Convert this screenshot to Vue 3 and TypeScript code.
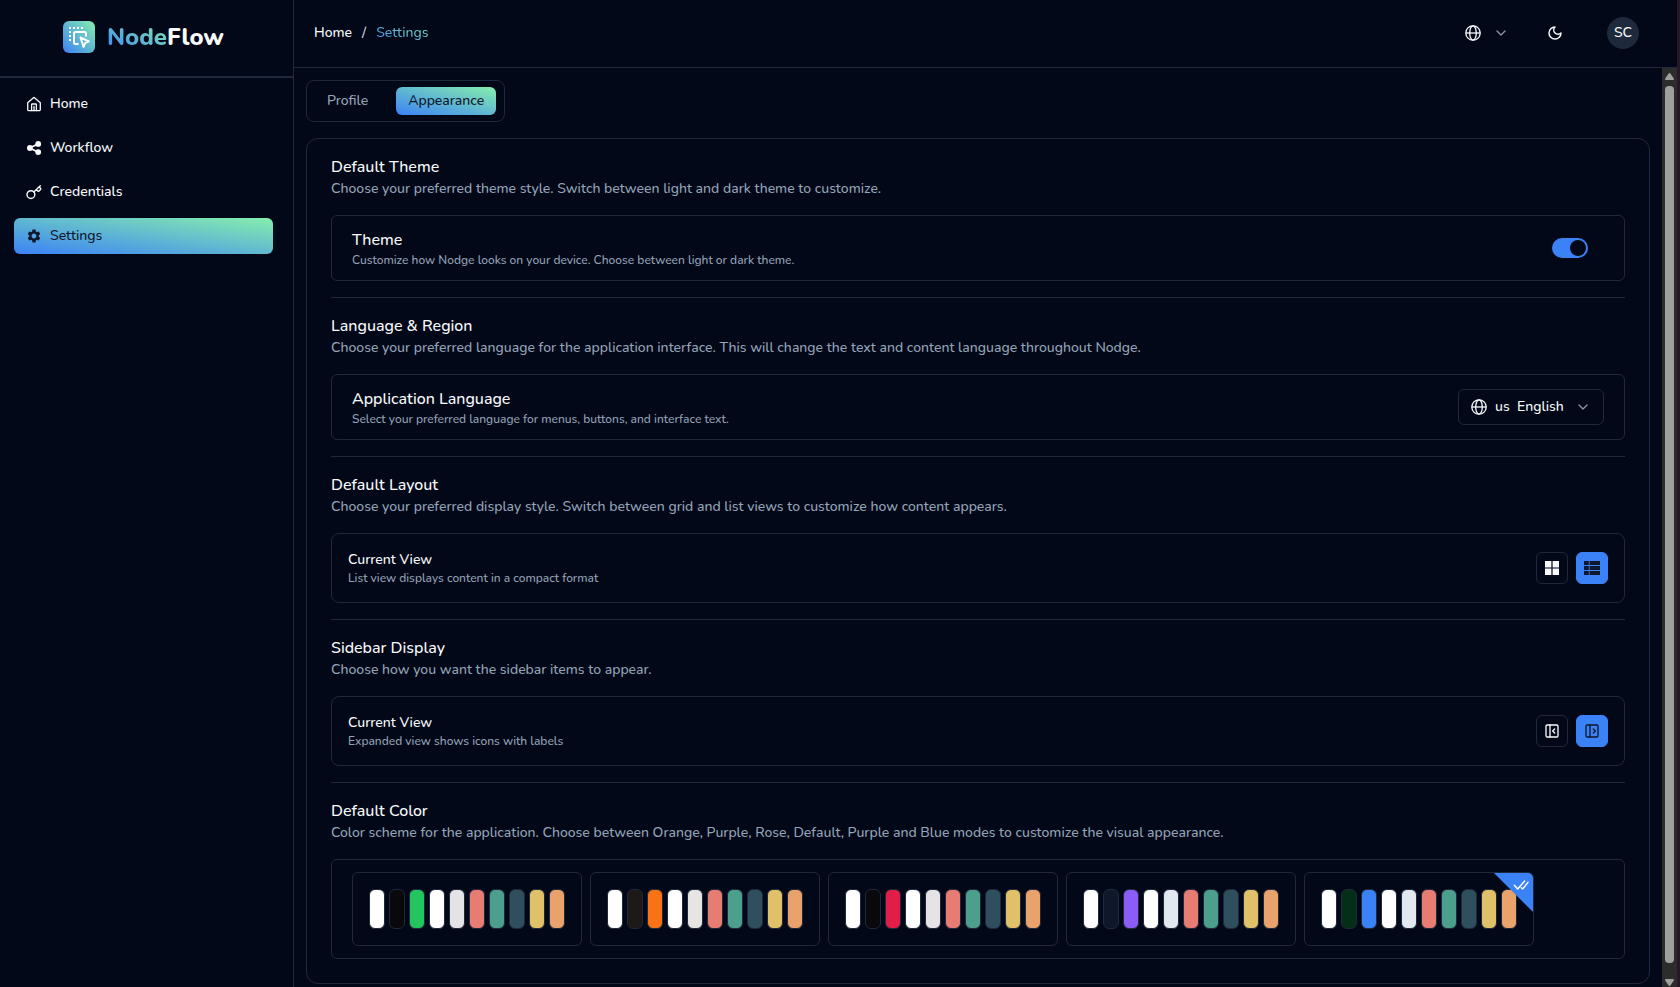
<script setup lang="ts">
import { ref } from 'vue'

interface NavItem {
  label: string
  icon: 'home' | 'share' | 'key' | 'gear'
  active?: boolean
}

interface Palette {
  name: string
  colors: string[]
}

const navItems: NavItem[] = [
  { label: 'Home', icon: 'home' },
  { label: 'Workflow', icon: 'share' },
  { label: 'Credentials', icon: 'key' },
  { label: 'Settings', icon: 'gear', active: true },
]

const charts = ['#e77c73', '#4b9f8c', '#2f4f5f', '#e0c068', '#e9a26b']

const palettes: Palette[] = [
  { name: 'Default', colors: ['#ffffff', '#09090b', '#22c55e', '#ffffff', '#e4e4e7', ...charts] },
  { name: 'Orange', colors: ['#ffffff', '#1c1917', '#f97316', '#ffffff', '#e7e5e4', ...charts] },
  { name: 'Rose', colors: ['#ffffff', '#09090b', '#e11d48', '#ffffff', '#e4e4e7', ...charts] },
  { name: 'Purple', colors: ['#ffffff', '#0f172a', '#8b5cf6', '#ffffff', '#e2e8f0', ...charts] },
  { name: 'Blue', colors: ['#ffffff', '#052e16', '#3b82f6', '#ffffff', '#e2e8f0', ...charts] },
]

const tab = ref('Appearance')
const dark = ref(true)
const language = ref('us')
const layout = ref<'grid' | 'list'>('list')
const sidebar = ref<'collapsed' | 'expanded'>('expanded')
const palette = ref('Blue')
</script>

<template>
  <div class="app">
    <aside class="sidebar">
      <div class="brand">
        <span class="brand-mark">
          <svg width="24" height="24" viewBox="0 0 24 24" fill="none" stroke="#fff" stroke-width="2">
            <path fill="#fff" stroke="none" d="M2 2h2v2H2zM6 2h2v2H6zM10 2h2v2h-2zM14 2h2v2h-2zM2 6h2v2H2zM2 10h2v2H2zM2 14h2v2H2z" />
            <path d="M11.500 19H8.500A1.500 1.500 0 0 1 7 17.500V8.500A1.500 1.500 0 0 1 8.500 7h9A1.500 1.500 0 0 1 19 8.500V11.500" />
            <path stroke-linejoin="round" d="M13.500 12.500l8.300 3.800-3.400 1.600-1.800 4z" />
          </svg>
        </span>
        <span class="brand-name"><span class="gradient-text">Node</span>Flow</span>
      </div>
      <nav class="nav">
        <a v-for="item in navItems" :key="item.label" href="#" class="nav-link" :class="{ active: item.active }">
          <svg v-if="item.icon === 'home'" width="16" height="16" viewBox="0 0 16 16" fill="none" stroke="currentColor" stroke-width="1.300" stroke-linejoin="round" stroke-linecap="round">
            <path d="M1.700 6.700 7.200 1.900a1.200 1.200 0 0 1 1.600 0l5.500 4.800v6.700a1.200 1.200 0 0 1-1.200 1.200H2.900a1.200 1.200 0 0 1-1.200-1.200z" />
            <path d="M5.600 14.500V8.800a.8.8 0 0 1 .8-.8h3.200a.8.8 0 0 1 .8.800v5.700M8 10.500v4" />
          </svg>
          <svg v-else-if="item.icon === 'share'" width="16" height="16" viewBox="0 0 16 16" fill="currentColor">
            <path d="M3.500 8 12 4M3.500 8l8.500 4" stroke="currentColor" stroke-width="1.800" />
            <circle cx="3.900" cy="8" r="2.900" />
            <circle cx="12.200" cy="3.900" r="2.900" />
            <circle cx="12.200" cy="12.100" r="2.900" />
          </svg>
          <svg v-else-if="item.icon === 'key'" width="16" height="16" viewBox="0 0 16 16" fill="none" stroke="currentColor" stroke-width="1.400" stroke-linejoin="round" stroke-linecap="round">
            <circle cx="4.900" cy="10.600" r="3.900" />
            <path d="M7.800 8 14.300 1.800M10.400 5.400l1.400 1.500a.9.900 0 0 0 1.300 0l1.400-1.400a.9.900 0 0 0 0-1.300L13 2.900" />
          </svg>
          <svg v-else width="16" height="16" viewBox="0 0 24 24" fill="currentColor">
            <path d="M19.140 12.940c.04-.3.06-.61.06-.94 0-.32-.02-.64-.07-.94l2.030-1.580c.18-.14.23-.41.12-.61l-1.920-3.320c-.12-.22-.37-.29-.59-.22l-2.390.96c-.5-.38-1.030-.7-1.620-.94l-.36-2.540c-.04-.24-.24-.41-.48-.41h-3.840c-.24 0-.43.17-.47.41l-.36 2.540c-.59.24-1.130.57-1.620.94l-2.390-.96c-.22-.08-.47 0-.59.22L2.740 8.870c-.12.21-.08.47.12.61l2.030 1.580c-.05.3-.09.63-.09.94s.02.64.07.94l-2.030 1.580c-.18.14-.23.41-.12.61l1.920 3.320c.12.22.37.29.59.22l2.390-.96c.5.38 1.030.7 1.620.94l.36 2.540c.05.24.24.41.48.41h3.840c.24 0 .44-.17.47-.41l.36-2.540c.59-.24 1.130-.56 1.620-.94l2.390.96c.22.08.47 0 .59-.22l1.920-3.320c.12-.22.07-.47-.12-.61l-2.010-1.580zM12 15.600c-1.980 0-3.600-1.620-3.600-3.600s1.620-3.600 3.600-3.600 3.600 1.620 3.600 3.600-1.620 3.600-3.600 3.600z" />
          </svg>
          <span>{{ item.label }}</span>
        </a>
      </nav>
    </aside>

    <div class="page">
      <header class="topbar">
        <nav class="crumbs" aria-label="Breadcrumb">
          <a href="#">Home</a>
          <span class="crumb-sep">/</span>
          <span class="gradient-text">Settings</span>
        </nav>
        <div class="actions">
          <button type="button" class="plain lang-menu" aria-label="Change language">
            <svg width="16" height="16" viewBox="0 0 16 16" fill="none" stroke="currentColor" stroke-width="1.300">
              <circle cx="8" cy="8" r="7.200" />
              <ellipse cx="8" cy="8" rx="3.300" ry="7.200" />
              <path d="M.8 8h14.400" />
            </svg>
            <svg class="chevron" width="16" height="16" viewBox="0 0 24 24" fill="none" stroke="currentColor" stroke-width="2" stroke-linecap="round" stroke-linejoin="round">
              <path d="m6 9 6 6 6-6" />
            </svg>
          </button>
          <button type="button" class="plain mode" aria-label="Toggle theme">
            <svg width="16" height="16" viewBox="0 0 24 24" fill="none" stroke="currentColor" stroke-width="2.200" stroke-linecap="round" stroke-linejoin="round">
              <path d="M12 3a6 6 0 0 0 9 9 9 9 0 1 1-9-9Z" />
            </svg>
          </button>
          <button type="button" class="avatar">SC</button>
        </div>
      </header>

      <div class="body">
        <main class="content">
          <div class="tabs">
            <button v-for="t in ['Profile', 'Appearance']" :key="t" type="button" class="tab" :class="{ active: tab === t }" @click="tab = t">{{ t }}</button>
          </div>

          <div class="panel">
            <section class="group">
              <h2>Default Theme</h2>
              <p class="desc">Choose your preferred theme style. Switch between light and dark theme to customize.</p>
              <div class="box roomy">
                <div class="label">
                  <label for="theme-switch" class="name">Theme</label>
                  <p class="hint">Customize how Nodge looks on your device. Choose between light or dark theme.</p>
                </div>
                <input id="theme-switch" v-model="dark" type="checkbox" role="switch" class="switch" />
              </div>
            </section>

            <section class="group">
              <h2>Language &amp; Region</h2>
              <p class="desc">Choose your preferred language for the application interface. This will change the text and content language throughout Nodge.</p>
              <div class="box roomy">
                <div class="label">
                  <label for="language" class="name">Application Language</label>
                  <p class="hint">Select your preferred language for menus, buttons, and interface text.</p>
                </div>
                <div class="select">
                  <svg width="16" height="16" viewBox="0 0 16 16" fill="none" stroke="currentColor" stroke-width="1.300">
                    <circle cx="8" cy="8" r="7.200" />
                    <ellipse cx="8" cy="8" rx="3.300" ry="7.200" />
                    <path d="M.8 8h14.400" />
                  </svg>
                  <select id="language" v-model="language">
                    <option value="us">us&nbsp; English</option>
                  </select>
                  <svg class="chevron" width="16" height="16" viewBox="0 0 24 24" fill="none" stroke="currentColor" stroke-width="2" stroke-linecap="round" stroke-linejoin="round">
                    <path d="m6 9 6 6 6-6" />
                  </svg>
                </div>
              </div>
            </section>

            <section class="group">
              <h2>Default Layout</h2>
              <p class="desc">Choose your preferred display style. Switch between grid and list views to customize how content appears.</p>
              <div class="box">
                <div class="label">
                  <h3 class="small-name">Current View</h3>
                  <p class="hint">List view displays content in a compact format</p>
                </div>
                <div class="choices">
                  <button type="button" class="choice" :class="{ active: layout === 'grid' }" aria-label="Grid view" @click="layout = 'grid'">
                    <svg width="16" height="16" viewBox="0 0 16 16" fill="currentColor">
                      <path d="M1 1h6.400v6.400H1zM8.600 1H15v6.400H8.600zM1 8.600h6.400V15H1zM8.600 8.600H15V15H8.600z" />
                    </svg>
                  </button>
                  <button type="button" class="choice" :class="{ active: layout === 'list' }" aria-label="List view" @click="layout = 'list'">
                    <svg width="16" height="16" viewBox="0 0 16 16" fill="currentColor">
                      <path d="M0 1h4.800v4H0zM5.600 1H16v4H5.600zM0 6h4.800v4H0zM5.600 6H16v4H5.600zM0 11h4.800v4H0zM5.600 11H16v4H5.600z" />
                    </svg>
                  </button>
                </div>
              </div>
            </section>

            <section class="group">
              <h2>Sidebar Display</h2>
              <p class="desc">Choose how you want the sidebar items to appear.</p>
              <div class="box">
                <div class="label">
                  <h3 class="small-name">Current View</h3>
                  <p class="hint">Expanded view shows icons with labels</p>
                </div>
                <div class="choices">
                  <button type="button" class="choice" :class="{ active: sidebar === 'collapsed' }" aria-label="Collapsed sidebar" @click="sidebar = 'collapsed'">
                    <svg width="16" height="16" viewBox="0 0 24 24" fill="none" stroke="currentColor" stroke-width="2" stroke-linecap="round" stroke-linejoin="round">
                      <rect x="3" y="3" width="18" height="18" rx="2" />
                      <path d="M9 3v18M16 15l-3-3 3-3" />
                    </svg>
                  </button>
                  <button type="button" class="choice" :class="{ active: sidebar === 'expanded' }" aria-label="Expanded sidebar" @click="sidebar = 'expanded'">
                    <svg width="16" height="16" viewBox="0 0 24 24" fill="none" stroke="currentColor" stroke-width="2" stroke-linecap="round" stroke-linejoin="round">
                      <rect x="3" y="3" width="18" height="18" rx="2" />
                      <path d="M9 3v18M14 9l3 3-3 3" />
                    </svg>
                  </button>
                </div>
              </div>
            </section>

            <section class="group">
              <h2>Default Color</h2>
              <p class="desc">Color scheme for the application. Choose between Orange, Purple, Rose, Default, Purple and Blue modes to customize the visual appearance.</p>
              <div class="box roomy palettes">
                <label v-for="p in palettes" :key="p.name" class="palette">
                  <input v-model="palette" type="radio" name="palette" :value="p.name" :aria-label="p.name" />
                  <span v-for="(c, i) in p.colors" :key="i" class="swatch" :style="{ backgroundColor: c }" />
                  <span v-if="palette === p.name" class="ribbon">
                    <svg width="16" height="16" viewBox="0 0 24 24" fill="none" stroke="#fff" stroke-width="2.200" stroke-linecap="round" stroke-linejoin="round">
                      <path d="M2 12.500l5 5.500L17.500 6M12.500 16l2 2L22.500 8" />
                    </svg>
                  </span>
                </label>
              </div>
            </section>
          </div>
        </main>

        <div class="scrollbar" aria-hidden="true">
          <svg width="9" height="7" viewBox="0 0 9 7" fill="#9f9f9f"><path d="M4.500 0Q5.200 0 5.700 1L8.800 5.500Q9.200 7 8 7H1Q-.2 7 .2 5.500L3.300 1Q3.800 0 4.500 0z" /></svg>
          <div class="thumb" />
          <svg width="9" height="7" viewBox="0 0 9 7" fill="#9f9f9f"><path d="M4.500 7Q5.200 7 5.700 6L8.800 1.500Q9.200 0 8 0H1Q-.2 0 .2 1.500L3.300 6Q3.800 7 4.500 7z" /></svg>
        </div>
      </div>
    </div>
    <div class="edge" />
  </div>
</template>

<style>
body {
  margin: 0;
  background: #020817;
}
</style>

<style scoped>
.app {
  display: flex;
  height: 100vh;
  overflow: hidden;
  background: #020817;
  color: #f8fafc;
  font: 500 14px/20px Nunito, Roboto, "Open Sans", sans-serif;
}

.app *,
.app *::before {
  box-sizing: border-box;
}

svg {
  display: block;
  flex: none;
}

h2,
h3,
p {
  margin: 0;
}

a {
  color: inherit;
  text-decoration: none;
}

button,
select {
  font: inherit;
  color: inherit;
  cursor: pointer;
}

.gradient-text {
  background: linear-gradient(to top right, #3b82f6, #86efac);
  -webkit-background-clip: text;
  background-clip: text;
  color: transparent;
}

.sidebar {
  flex: none;
  width: 294px;
  border-right: 1px solid #1e293b;
}

.brand {
  display: flex;
  align-items: center;
  justify-content: center;
  gap: 12px;
  height: 78px;
  padding: 0 6px 2px 0;
  border-bottom: 2px solid #1e293b;
}

.brand-mark {
  display: grid;
  place-items: center;
  width: 32px;
  height: 32px;
  border-radius: 6px;
  background: linear-gradient(to top right, #3b82f6, #86efac);
}

.brand-name {
  font-size: 24px;
  line-height: 32px;
  font-weight: 800;
}

.nav {
  display: flex;
  flex-direction: column;
  gap: 8px;
  padding: 8px 20px 8px 14px;
}

.nav-link {
  display: flex;
  align-items: center;
  gap: 8px;
  height: 36px;
  padding: 0 12px;
  border-radius: 6px;
}

.nav-link.active {
  background: linear-gradient(to top right, #3b82f6, #86efac);
  color: #0f172a;
}

.page {
  display: flex;
  flex: 1;
  flex-direction: column;
  min-width: 0;
}

.topbar {
  display: flex;
  flex: none;
  align-items: center;
  justify-content: space-between;
  height: 68px;
  padding: 0 38px 2px 20px;
  border-bottom: 1px solid #1e293b;
}

.crumbs {
  display: flex;
  gap: 10px;
}

.crumb-sep {
  color: #cbd5e1;
}

.actions {
  display: flex;
  align-items: center;
}

.plain {
  display: flex;
  align-items: center;
  justify-content: center;
  height: 36px;
  padding: 0;
  border: 0;
  background: none;
}

.lang-menu {
  gap: 12px;
  padding: 0 12px;
  margin-right: 16px;
}

.mode {
  width: 36px;
  margin-right: 34px;
}

.chevron {
  color: #8b94a3;
}

.avatar {
  width: 32px;
  height: 32px;
  padding: 0;
  border: 0;
  border-radius: 50%;
  background: #1e293b;
}

.body {
  display: flex;
  flex: 1;
  min-height: 0;
}

.content {
  display: flex;
  flex: 1;
  flex-direction: column;
  align-items: flex-start;
  gap: 16px;
  min-width: 0;
  padding: 12px 12px 0;
  overflow-y: auto;
  scrollbar-width: none;
}

.tabs {
  display: flex;
  flex: none;
  gap: 16px;
  padding: 6px 8px;
  border: 1px solid #1e293b;
  border-radius: 8px;
}

.tab {
  height: 28px;
  padding: 0 12px;
  border: 0;
  border-radius: 6px;
  background: none;
  color: #94a3b8;
}

.tab.active {
  background: linear-gradient(to top right, #3b82f6, #86efac);
  color: #0f172a;
}

.panel {
  flex: none;
  width: 100%;
  padding: 16px 24px 24px;
  border: 1px solid #1e293b;
  border-radius: 12px;
}

.group + .group {
  margin-top: 16px;
  padding-top: 16px;
  border-top: 1px solid #1e293b;
}

h2,
.name {
  display: block;
  font-size: 16px;
  line-height: 24px;
  font-weight: 500;
}

.desc {
  color: #94a3b8;
}

.box {
  display: flex;
  align-items: center;
  justify-content: space-between;
  margin-top: 16px;
  padding: 16px;
  border: 1px solid #1e293b;
  border-radius: 8px;
}

.box.roomy {
  padding: 12px 20px;
  border-radius: 6px;
}

.small-name {
  font-size: 14px;
  line-height: 20px;
  font-weight: 500;
}

.hint {
  color: #94a3b8;
  font-size: 12px;
  line-height: 16px;
}

.switch {
  appearance: none;
  width: 36px;
  height: 20px;
  margin: 0 16px 0 0;
  padding: 2px;
  border-radius: 10px;
  background: #1e293b;
  cursor: pointer;
}

.switch::before {
  content: "";
  display: block;
  width: 16px;
  height: 16px;
  border-radius: 50%;
  background: #020817;
}

.switch:checked {
  background: #3b82f6;
}

.switch:checked::before {
  margin-left: auto;
}

.select {
  display: flex;
  align-items: center;
  gap: 8px;
  width: 146px;
  height: 36px;
  padding: 0 12px;
  border: 1px solid #1e293b;
  border-radius: 6px;
}

.select select {
  appearance: none;
  flex: 1;
  min-width: 0;
  padding: 0;
  border: 0;
  background: #020817;
  outline: none;
}

.choices {
  display: flex;
  gap: 8px;
}

.choice {
  display: grid;
  place-items: center;
  width: 32px;
  height: 32px;
  padding: 0;
  border: 1px solid #1e293b;
  border-radius: 6px;
  background: none;
}

.choice.active {
  border-color: #3b82f6;
  background: #3b82f6;
  color: #0f172a;
}

.box.palettes {
  flex-wrap: wrap;
  justify-content: flex-start;
  gap: 8px;
}

.palette {
  position: relative;
  display: flex;
  gap: 4px;
  padding: 16px;
  overflow: hidden;
  border: 1px solid #1e293b;
  border-radius: 6px;
  cursor: pointer;
}

.palette input {
  position: absolute;
  width: 1px;
  height: 1px;
  margin: 0;
  opacity: 0;
}

.swatch {
  width: 16px;
  height: 40px;
  border: 1px solid #1e293b;
  border-radius: 6px;
}

.ribbon {
  position: absolute;
  top: 0;
  right: 0;
  display: flex;
  justify-content: flex-end;
  width: 39px;
  height: 39px;
  padding: 4px;
  background: #3b82f6;
  clip-path: polygon(0 0, 100% 0, 100% 100%);
}

.scrollbar {
  display: flex;
  flex: none;
  flex-direction: column;
  align-items: center;
  gap: 6px;
  width: 15px;
  padding: 5px 0 1px;
  background: #2c2c2c;
}

.thumb {
  flex: 1;
  width: 9px;
  margin-bottom: 10px;
  border-radius: 4px;
  background: #9f9f9f;
}

.edge {
  flex: none;
  width: 3px;
  background: #261828;
}
</style>
